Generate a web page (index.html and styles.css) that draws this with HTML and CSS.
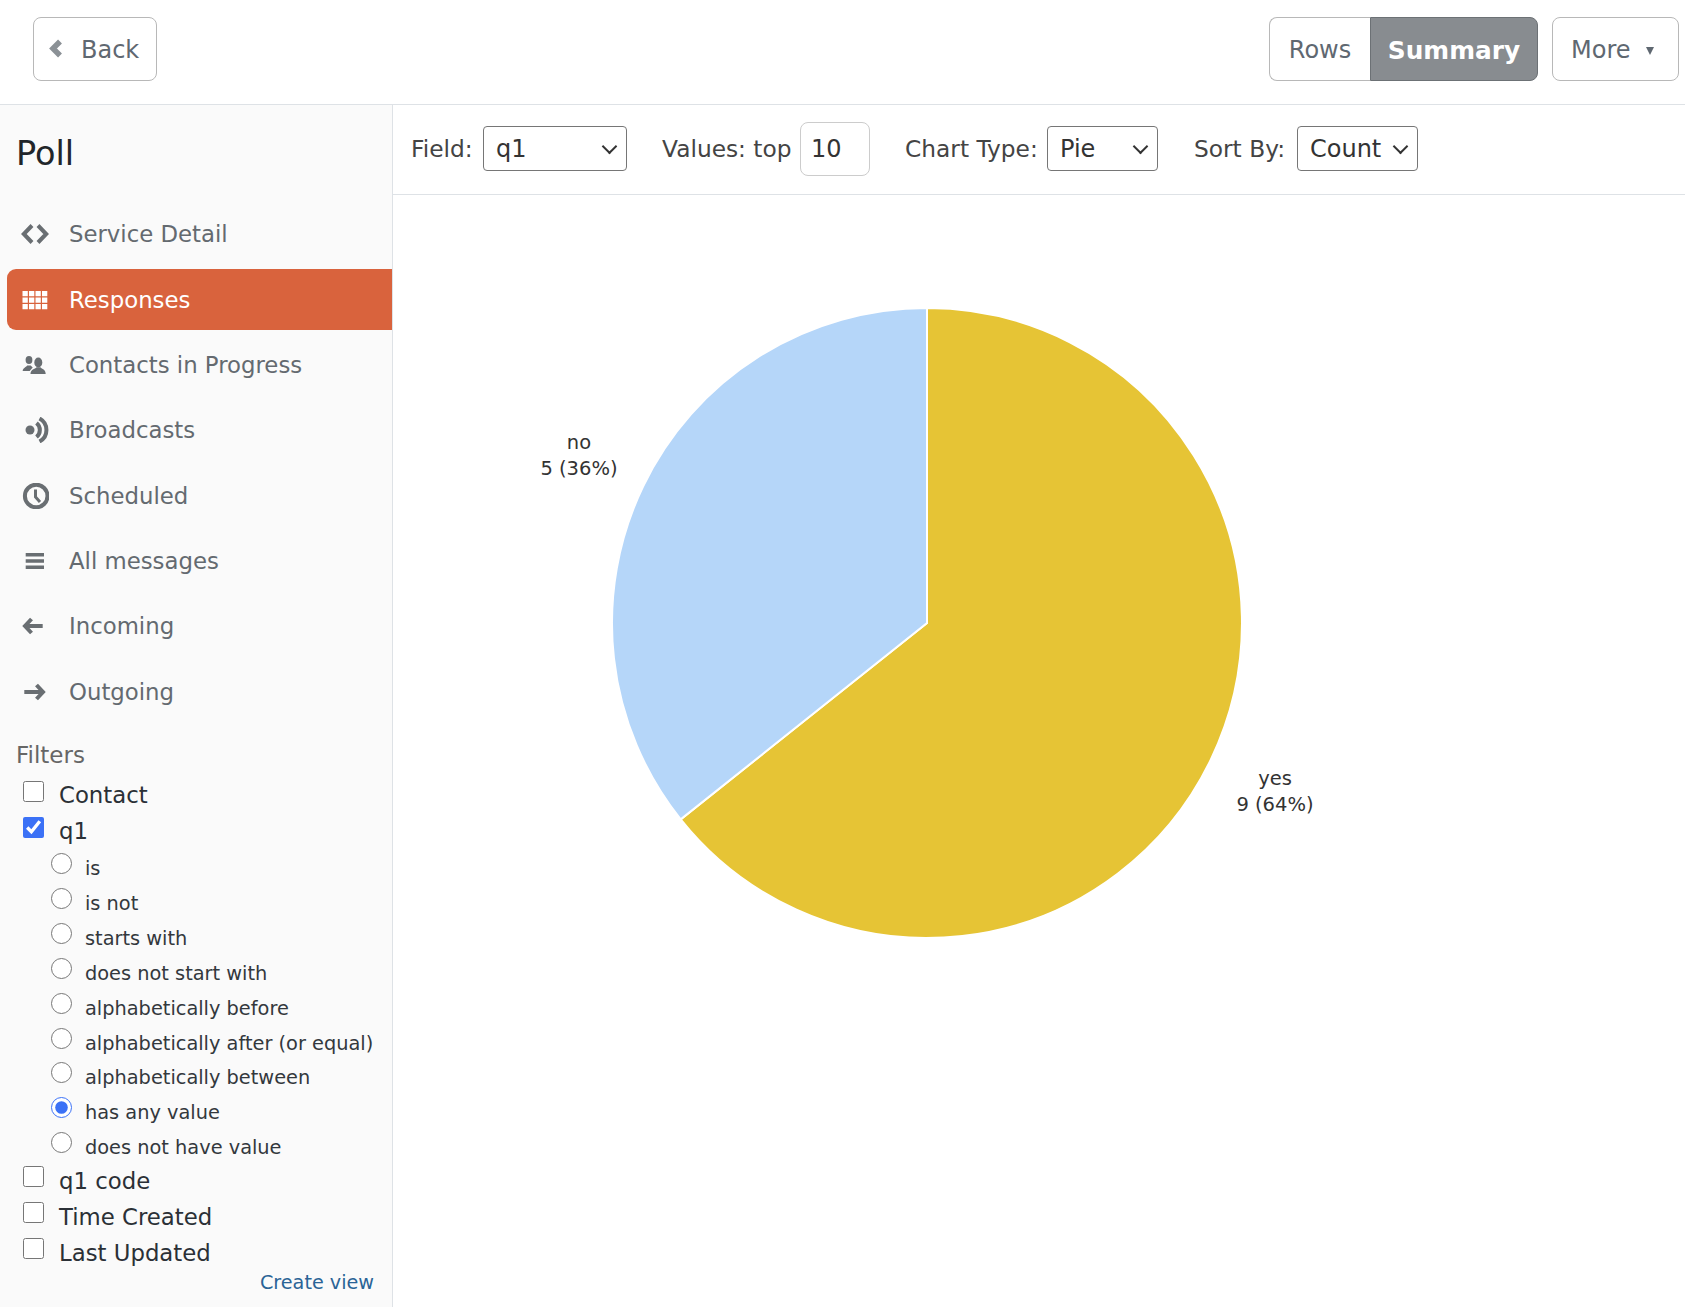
FILE: index.html
```html
<!DOCTYPE html>
<html lang="en">
<head>
<meta charset="utf-8">
<title>Poll</title>
<link rel="stylesheet" href="styles.css">
</head>
<body>
<header class="topbar">
  <a class="btn back"><svg class="chev" viewBox="0 0 14 19"><path d="M11 2.500 L4 9.500 L11 16.500" /></svg><span>Back</span></a>
  <div class="spacer"></div>
  <div class="group">
    <a class="btn left"><span>Rows</span></a>
    <a class="btn right active"><span>Summary</span></a>
  </div>
  <a class="btn more"><span>More</span><span class="caret"></span></a>
</header>
<div class="main">
  <aside class="side">
    <h1 class="title">Poll</h1>
    <nav class="nav">
      <a class="item"><svg class="ico" viewBox="0 0 28 20"><path class="st" d="M11 1.500 L2.800 10 L11 18.500 M17 1.500 L25.200 10 L17 18.500"/></svg>Service Detail</a>
      <a class="item on"><svg class="ico" viewBox="0 0 28 20"><path class="fl" d="M1.500 1h5.300v5.300H1.500zM8 1h5.300v5.300H8zM14.500 1h5.300v5.300h-5.300zM21 1h5.300v5.300H21zM1.500 7.500h5.300v5.300H1.500zM8 7.500h5.300v5.300H8zM14.500 7.500h5.300v5.300h-5.300zM21 7.500h5.300v5.300H21zM1.500 14h5.300v5.300H1.500zM8 14h5.300v5.300H8zM14.500 14h5.300v5.300h-5.300zM21 14h5.300v5.300H21z"/></svg>Responses</a>
      <a class="item"><svg class="ico" viewBox="0 0 28 20"><ellipse class="fl" cx="8" cy="5" rx="3.400" ry="4"/><path class="fl" d="M1.700 16c0-3 3-3.500 4.500-5.500h3.500l2 2-3 3.500z"/><ellipse class="fl" cx="17.300" cy="7.500" rx="4" ry="5"/><path class="fl" d="M9.500 19c0-5 4.500-4.800 6-6.800h4c1.500 2 5.200 1.800 5.200 6.800z"/></svg>Contacts in Progress</a>
      <a class="item"><svg class="ico" viewBox="0 0 28 26"><circle class="fl" cx="9" cy="13" r="4.500"/><path class="st" d="M15.500 6A9 9 0 0 1 15.500 20M18.500 1.500A13 13 0 0 1 18.500 24.500"/></svg>Broadcasts</a>
      <a class="item"><svg class="ico" viewBox="0 0 28 26"><circle class="st" cx="15.200" cy="13" r="11.300"/><path class="st thin" d="M14.500 6.500v7.500l4.500 5"/></svg>Scheduled</a>
      <a class="item"><svg class="ico" viewBox="0 0 28 20"><path class="fl" d="M4.700 2h18.300v3.500H4.700zM4.700 8.200h18.300v3.600H4.700zM4.700 14.500h18.300V18H4.700z"/></svg>All messages</a>
      <a class="item"><svg class="ico" viewBox="0 0 28 20"><path class="st" d="M10.500 3 L4 10 L10.500 17 M4 10 H21.700"/></svg>Incoming</a>
      <a class="item"><svg class="ico" viewBox="0 0 28 20"><path class="st" d="M15.500 3 L22 10 L15.500 17 M3.300 10 H22"/></svg>Outgoing</a>
    </nav>
    <div class="filters">
      <div class="ftitle">Filters</div>
      <label class="chk"><input type="checkbox"><span>Contact</span></label>
      <label class="chk"><input type="checkbox" checked><span>q1</span></label>
      <div class="radios">
        <label class="rad"><input type="radio" name="op"><span>is</span></label>
        <label class="rad"><input type="radio" name="op"><span>is not</span></label>
        <label class="rad"><input type="radio" name="op"><span>starts with</span></label>
        <label class="rad"><input type="radio" name="op"><span>does not start with</span></label>
        <label class="rad"><input type="radio" name="op"><span>alphabetically before</span></label>
        <label class="rad"><input type="radio" name="op"><span>alphabetically after (or equal)</span></label>
        <label class="rad"><input type="radio" name="op"><span>alphabetically between</span></label>
        <label class="rad"><input type="radio" name="op" checked><span>has any value</span></label>
        <label class="rad"><input type="radio" name="op"><span>does not have value</span></label>
      </div>
      <label class="chk"><input type="checkbox"><span>q1 code</span></label>
      <label class="chk"><input type="checkbox"><span>Time Created</span></label>
      <label class="chk"><input type="checkbox"><span>Last Updated</span></label>
      <div class="viewrow"><a class="create">Create view</a></div>
    </div>
  </aside>
  <section class="content">
    <div class="toolbar">
      <span class="lbl l1">Field:</span>
      <span class="selwrap s1"><select class="sel"><option>q1</option></select></span>
      <span class="lbl l2">Values: top</span>
      <input class="num" type="text" value="10">
      <span class="lbl l3">Chart Type:</span>
      <span class="selwrap s2"><select class="sel"><option>Pie</option></select></span>
      <span class="lbl l4">Sort By:</span>
      <span class="selwrap s3"><select class="sel"><option>Count</option></select></span>
    </div>
    <div class="chart">
      <svg class="pie" viewBox="0 0 1292 1112">
        <path class="yes" d="M534 113 A315 315 0 1 1 287.700 624.400 L534 428 Z" />
        <path class="no" d="M534 113 L534 428 L287.700 624.400 A315 315 0 0 1 534 113 Z" />
        <text class="pl" x="186" y="254">no</text>
        <text class="pl" x="186" y="280">5 (36%)</text>
        <text class="pl" x="882" y="590">yes</text>
        <text class="pl" x="882" y="616">9 (64%)</text>
      </svg>
    </div>
  </section>
</div>
</body>
</html>
```
FILE: styles.css
```css
* { box-sizing: border-box; }
html, body { margin: 0; height: 100%; }
body { width: 1685px; height: 1307px; overflow: hidden; background: #fff; font-family: "DejaVu Sans", sans-serif; color: #212529; font-size: 22px; }
.topbar { height: 105px; border-bottom: 1px solid #dee2e6; display: flex; align-items: flex-start; padding: 17px 6px 0 33px; }
.spacer { flex: 1; }
.btn { display: flex; align-items: center; height: 64px; border: 1px solid #b8b8b8; border-radius: 8px; color: #5f6871; font-size: 24px; padding: 2px 18px 0; background: #fff; }
.back { width: 124px; padding: 2px 0 0 15px; }
.chev { width: 14px; height: 19px; margin-right: 18px; margin-top: -3px; flex: none; }
.chev path { fill: none; stroke: #8b9196; stroke-width: 5.500; }
.group { display: flex; }
.left { border-radius: 8px 0 0 8px; width: 101px; border-right: 0; justify-content: center; padding: 2px 0 0; }
.right { border-radius: 0 8px 8px 0; width: 168px; justify-content: center; padding: 2px 0 0; }
.active { background: #888c90; border-color: #6c7175; color: #fff; font-weight: 700; font-size: 24.800px; }
.more { width: 127px; margin-left: 14px; }
.caret { margin-left: 15px; margin-top: 2px; border-style: solid; border-width: 8px 4.500px 0; border-color: #5f6871 transparent transparent; }
.main { display: flex; height: 1202px; }
.side { width: 393px; background: #fafafa; border-right: 1px solid #dee2e6; padding-left: 7px; }
.title { margin: 0; padding: 25px 0 0 9px; height: 99px; font-weight: 400; font-size: 33.500px; line-height: 48px; color: #212529; }
.nav { display: flex; flex-direction: column; }
.item { display: flex; align-items: center; height: 61px; margin-bottom: 4.300px; color: #646a70; font-size: 22.800px; border-radius: 9px 0 0 9px; padding-left: 14px; }
.item:first-child { height: 59px; margin-bottom: 6.300px; }
.item.on { background: #d9633d; color: #fff; }
.ico { width: 28px; height: 26px; margin-right: 20px; flex: none; }
.fl { fill: #696e72; }
.st { fill: none; stroke: #696e72; stroke-width: 4; }
.thin { stroke-width: 3; }
.on .fl { fill: #fff; }
.filters { padding: 0 0 0 9px; margin-top: 11px; }
.ftitle { font-size: 23px; color: #666; height: 40px; line-height: 36px; }
.chk { display: flex; align-items: center; height: 36px; font-size: 22.800px; padding-left: 7px; color: #2b3036; }
.chk input { width: 21px; height: 21px; margin: 0 15px 8px 0; accent-color: #3b71f6; }
.radios { display: flex; flex-direction: column; margin: 2px 0 -2px; }
.rad { display: flex; align-items: center; height: 34.850px; font-size: 19.350px; padding-left: 35px; color: #33383d; }
.rad input { width: 21px; height: 21px; margin: 0 13px 10px 0; accent-color: #3b71f6; }
.viewrow { display: flex; justify-content: flex-end; padding: 0 18px 0 0; }
.create { color: #2a6496; font-size: 19.200px; }
.content { flex: 1; display: flex; flex-direction: column; }
.toolbar { height: 90px; border-bottom: 1px solid #dee2e6; display: flex; align-items: center; padding: 0 0 2px 18px; font-size: 23.300px; color: #444; }
.lbl { white-space: nowrap; }
.l1 { width: 72px; }
.l2 { margin-left: 35px; width: 129px; }
.l3 { margin-left: 35px; width: 132px; }
.l4 { margin-left: 36px; width: 93px; }
.l3 + .selwrap, .l4 + .selwrap { margin-left: 10px; }
.selwrap { position: relative; display: block; height: 45px; }
.selwrap::after { content: ""; position: absolute; right: 12px; top: 15px; width: 9px; height: 9px; border-right: 2px solid #333; border-bottom: 2px solid #333; transform: rotate(45deg); pointer-events: none; }
.sel { appearance: none; width: 100%; height: 45px; font: inherit; font-size: 24px; color: #333; background: #fff; border: 1px solid #767676; border-radius: 4px; padding-left: 12px; }
.s1 { width: 144px; }
.s2 { width: 111px; }
.s3 { width: 121px; }
.num { width: 70px; height: 54px; margin-left: 9px; font: inherit; font-size: 24px; color: #333; border: 1px solid #ccc; border-radius: 8px; padding: 0 10px; }
.chart { flex: 1; }
.pie { width: 1292px; height: 1112px; display: block; }
.yes { fill: #e6c435; stroke: #fff; stroke-width: 2; }
.no { fill: #b5d6f9; stroke: #fff; stroke-width: 2; }
.pl { font-size: 19.500px; fill: #333; text-anchor: middle; }
```
